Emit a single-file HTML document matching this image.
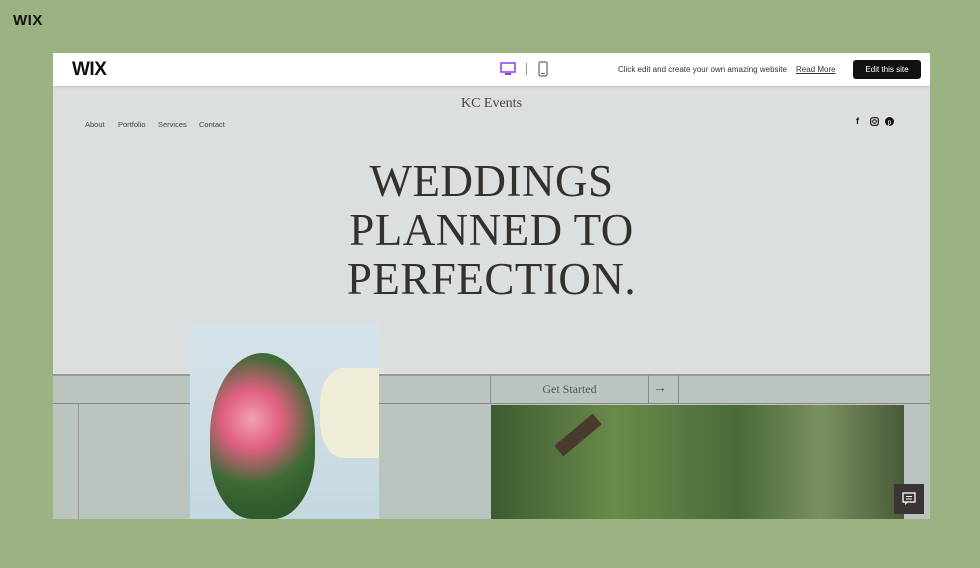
<!DOCTYPE html>
<html><head><style>
*{margin:0;padding:0;box-sizing:border-box}
body{width:980px;height:568px;background:#9bb283;position:relative;overflow:hidden;font-family:"Liberation Sans",sans-serif}
.abs{position:absolute}
.nav{position:absolute;top:67px;font-size:7.5px;color:#444}
</style></head><body>
<div class="abs" style="left:13px;top:12px;font-weight:bold;font-size:15px;color:#111;letter-spacing:0.5px">WIX</div>
<div class="abs" style="left:53px;top:53px;width:877px;height:466px;background:#dcdfdf;overflow:hidden">
  <div class="abs" style="left:0;top:0;width:877px;height:33px;background:#fff;box-shadow:0 1px 3px rgba(0,0,0,.15)">
    <div class="abs" style="left:19px;top:6px;font-weight:bold;font-size:19px;color:#111;letter-spacing:-0.5px">WIX</div>
    <svg class="abs" style="left:447px;top:9px" width="16" height="15" viewBox="0 0 16 15"><rect x="1" y="1" width="14" height="9" fill="none" stroke="#8a3cf0" stroke-width="1.5"/><rect x="5" y="11" width="6" height="2" fill="#8a3cf0"/></svg>
    <div class="abs" style="left:473px;top:10px;width:1px;height:12px;background:#999"></div>
    <svg class="abs" style="left:485px;top:8px" width="10" height="16" viewBox="0 0 10 16"><rect x="1" y="1" width="8" height="14" rx="1.5" fill="none" stroke="#666" stroke-width="1.2"/><line x1="3" y1="12.5" x2="7" y2="12.5" stroke="#666"/></svg>
    <div class="abs" style="left:565px;top:12px;font-size:8px;color:#333">Click edit and create your own amazing website</div>
    <div class="abs" style="left:743px;top:12px;font-size:8px;color:#333;text-decoration:underline">Read More</div>
    <div class="abs" style="left:800px;top:7px;width:68px;height:19px;background:#111;border-radius:3px;color:#fff;font-size:8px;text-align:center;line-height:19px">Edit this site</div>
  </div>
  <div class="abs" style="left:0;top:43px;width:877px;text-align:center;font-family:'Liberation Serif',serif;font-size:14px;color:#444">KC Events</div>
  <div class="nav" style="left:32px">About</div>
  <div class="nav" style="left:65px">Portfolio</div>
  <div class="nav" style="left:105px">Services</div>
  <div class="nav" style="left:146px">Contact</div>
  <div class="abs" style="left:803px;top:63px;font-size:9px;font-weight:bold;color:#111">f</div>
  <svg class="abs" style="left:817px;top:64px" width="9" height="9"><rect x="0.7" y="0.7" width="7.6" height="7.6" rx="2" fill="none" stroke="#111" stroke-width="1.2"/><circle cx="4.5" cy="4.5" r="1.8" fill="none" stroke="#111"/></svg>
  <svg class="abs" style="left:832px;top:64px" width="9" height="9"><circle cx="4.5" cy="4.5" r="4.5" fill="#111"/><text x="4.5" y="7.5" font-size="7" fill="#fff" text-anchor="middle" font-family="Liberation Sans">p</text></svg>
  <div class="abs" style="left:0;top:104px;width:877px;text-align:center;font-family:'Liberation Serif',serif;font-size:45px;line-height:49px;color:#34302c;letter-spacing:0.5px">WEDDINGS<br>PLANNED TO<br>PERFECTION.</div>
  <div class="abs" style="left:0;top:321px;width:877px;height:145px;background:#bcc4bf"></div>
  <div class="abs" style="left:0;top:321px;width:877px;height:2px;background:#999"></div>
  <div class="abs" style="left:0;top:350px;width:877px;height:1px;background:#888"></div>
  <div class="abs" style="left:25px;top:351px;width:1px;height:115px;background:#999"></div>
  <div class="abs" style="left:437px;top:322px;width:1px;height:29px;background:#888"></div>
  <div class="abs" style="left:595px;top:322px;width:1px;height:29px;background:#888"></div>
  <div class="abs" style="left:625px;top:322px;width:1px;height:29px;background:#888"></div>
  <div class="abs" style="left:438px;top:329px;width:157px;text-align:center;font-family:'Liberation Serif',serif;font-size:12px;color:#555">Get Started</div>
  <div class="abs" style="left:600px;top:326px;font-size:14px;color:#555">&#8594;</div>
  <div class="abs" style="left:137px;top:270px;width:189px;height:196px;background:linear-gradient(#d6e3ea,#c5d8e0)">
    <div class="abs" style="left:20px;top:30px;width:105px;height:166px;border-radius:50% 50% 40% 40%;background:radial-gradient(circle at 40% 40%,#f0a0b5 0,#e06080 25%,#3d6a35 55%,#2f5a2a 80%)"></div>
    <div class="abs" style="left:130px;top:45px;width:59px;height:90px;border-radius:40% 0 0 40%;background:#efecd8"></div>
  </div>
  <div class="abs" style="left:438px;top:352px;width:413px;height:114px;background:linear-gradient(90deg,#3e5a30,#6a8a4a 30%,#4a6a38 60%,#7a9060 80%,#4a5a38);"></div>
  <div class="abs" style="left:500px;top:375px;width:50px;height:14px;background:#4a3a2e;transform:rotate(-40deg)"></div>
  <div class="abs" style="left:841px;top:431px;width:30px;height:30px;background:#3a3532"></div>
  <svg class="abs" style="left:849px;top:439px" width="14" height="14"><rect x="1" y="1" width="12" height="9" fill="none" stroke="#fff" stroke-width="1.3"/><line x1="4" y1="4.5" x2="10" y2="4.5" stroke="#fff"/><line x1="4" y1="7" x2="10" y2="7" stroke="#fff"/><path d="M3 10 L3 13 L6 10" fill="#fff"/></svg>
</div>
</body></html>
